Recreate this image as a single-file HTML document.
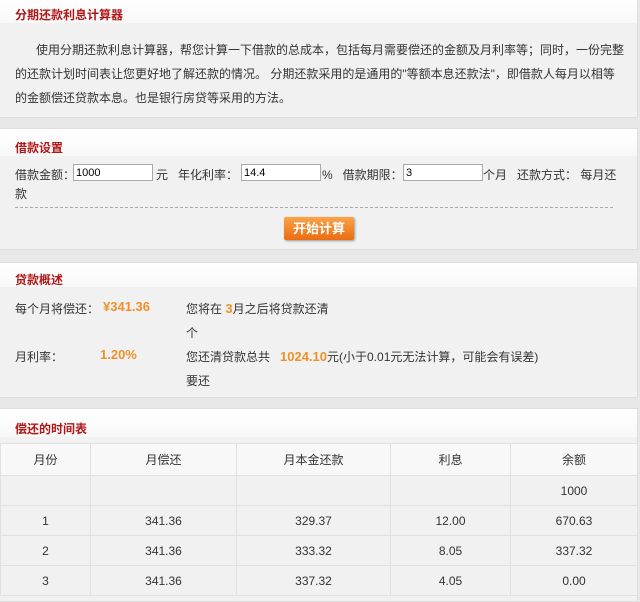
<!DOCTYPE html><html><head><meta charset="utf-8"><style>
*{margin:0;padding:0;box-sizing:border-box}
body{width:640px;height:600px;overflow:hidden;background:#e8e8e8;font-family:"Liberation Sans","Noto Sans CJK SC",sans-serif;font-size:12px;color:#333;position:relative}
.a{position:absolute;white-space:nowrap}
.sec{position:absolute;left:0;width:638px;background:#f1f1f1;border:1px solid #ddd;border-left:none}
.hd{position:absolute;left:0;width:100%;background:linear-gradient(#fff,#f8f8f8);}
.t{color:#b01818;font-weight:bold;font-size:12px}
.o{color:#f0902a;font-weight:bold;font-size:13px}
input{position:absolute;height:17px;border:1px solid #aaa;background:#fff;font-size:11px;padding-left:2px;font-family:"Liberation Sans",sans-serif}
table{position:absolute;left:0;top:443px;width:638px;border-collapse:collapse;font-size:12px}
td{border:1px solid #e0e0e0;text-align:center;height:30px}
</style></head><body>
<div class="sec" style="top:-2px;height:120px"><div class="hd" style="top:0;height:24px"></div></div>
<div class="a t" style="left:15px;top:6px">分期还款利息计算器</div>
<div class="a" style="left:36px;top:41px">使用分期还款利息计算器，帮您计算一下借款的总成本，包括每月需要偿还的金额及月利率等；同时，一份完整</div>
<div class="a" style="left:15px;top:65px">的还款计划时间表让您更好地了解还款的情况。 分期还款采用的是通用的"等额本息还款法"，即借款人每月以相等</div>
<div class="a" style="left:15px;top:89px">的金额偿还贷款本息。也是银行房贷等采用的方法。</div>

<div class="sec" style="top:128px;height:122px"><div class="hd" style="top:0;height:27px"></div></div>
<div class="a t" style="left:15px;top:139px">借款设置</div>
<div class="a" style="left:15px;top:166px">借款金额：</div><input style="left:73px;top:164px;width:80px" value="1000">
<div class="a" style="left:156px;top:166px">元 &nbsp; 年化利率：</div><input style="left:241px;top:164px;width:80px" value="14.4">
<div class="a" style="left:322px;top:166px">% &nbsp; 借款期限：</div><input style="left:403px;top:164px;width:80px" value="3">
<div class="a" style="left:483px;top:166px">个月 &nbsp; 还款方式： 每月还</div>
<div class="a" style="left:15px;top:185px">款</div>
<div class="a" style="left:15px;top:207px;width:598px;border-top:1px dashed #aaa"></div>
<div class="a" style="left:284px;top:217px;width:70px;height:23px;background:linear-gradient(#fba349,#ec6c10);border-radius:2px;color:#fff;font-weight:bold;text-align:center;line-height:23px;font-size:13px;box-shadow:1px 1px 2px #999">开始计算</div>

<div class="sec" style="top:262px;height:136px"><div class="hd" style="top:0;height:24px"></div></div>
<div class="a t" style="left:15px;top:271px">贷款概述</div>
<div class="a" style="left:15px;top:300px">每个月将偿还：</div><div class="a o" style="left:103px;top:299px">¥341.36</div>
<div class="a" style="left:186px;top:300px">您将在 <span class="o">3</span>月之后将贷款还清</div>
<div class="a" style="left:186px;top:324px">个</div>
<div class="a" style="left:15px;top:348px">月利率：</div><div class="a o" style="left:100px;top:347px">1.20%</div>
<div class="a" style="left:186px;top:348px">您还清贷款总共 &nbsp; <span class="o">1024.10</span>元(小于0.01元无法计算，可能会有误差)</div>
<div class="a" style="left:186px;top:372px">要还</div>

<div class="sec" style="top:408px;height:194px"><div class="hd" style="top:0;height:28px"></div></div>
<div class="a t" style="left:15px;top:420px">偿还的时间表</div>
<table>
<tr style="background:#f8f8f8;height:32px"><td style="width:90px">月份</td><td style="width:146px">月偿还</td><td style="width:154px">月本金还款</td><td style="width:120px">利息</td><td>余额</td></tr>
<tr><td></td><td></td><td></td><td></td><td>1000</td></tr>
<tr><td>1</td><td>341.36</td><td>329.37</td><td>12.00</td><td>670.63</td></tr>
<tr><td>2</td><td>341.36</td><td>333.32</td><td>8.05</td><td>337.32</td></tr>
<tr><td>3</td><td>341.36</td><td>337.32</td><td>4.05</td><td>0.00</td></tr>
</table>
</body></html>
